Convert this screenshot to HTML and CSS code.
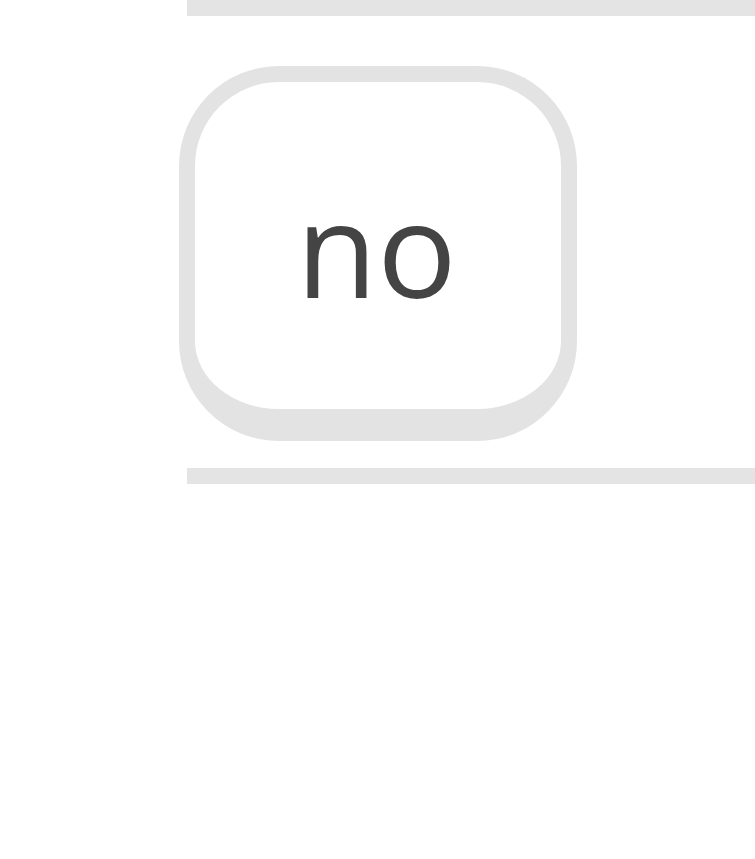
FILE: index.html
```html
<!DOCTYPE html>
<html>
<head>
<meta charset="utf-8">
<link rel="stylesheet" href="styles.css">
</head>
<body>
<div class="page">
  <div class="rule"></div>
  <div class="key"><span class="label">no</span></div>
  <div class="rule"></div>
</div>
</body>
</html>
```
FILE: styles.css
```css
html, body {
  margin: 0;
  padding: 0;
  background: #ffffff;
}
.page {
  padding-left: 187px;
  overflow: hidden;
}
.rule {
  height: 16px;
  background: #e4e4e4;
}
.key {
  box-sizing: border-box;
  width: 398px;
  height: 375px;
  margin: 50px 0 27px -8px;
  border: 16px solid #e3e3e3;
  border-bottom-width: 32px;
  border-radius: 100px;
  background: #ffffff;
  display: flex;
  align-items: center;
  justify-content: center;
}
.label {
  font-family: "Open Sans", "Noto Sans", sans-serif;
  font-size: 132px;
  line-height: 1;
  color: #444444;
  margin-left: -3px;
  padding-top: 3px;
}
```
